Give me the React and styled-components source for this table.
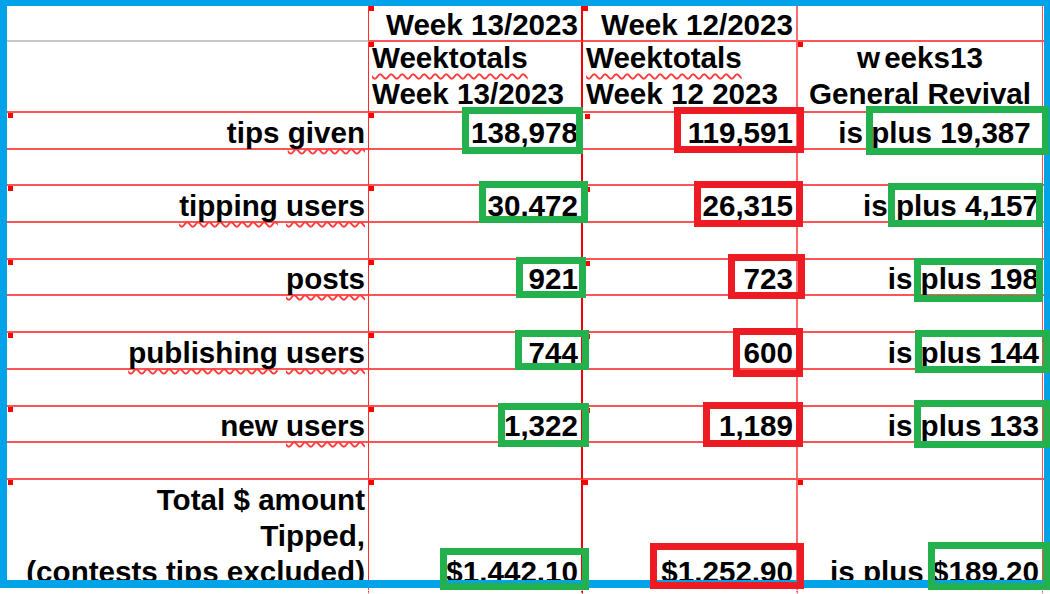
import React from "react";
import styled, { createGlobalStyle } from "styled-components";

const GlobalStyle = createGlobalStyle`
  html, body {
    margin: 0;
    padding: 0;
    background: #fff;
  }
  body {
    font-family: "Liberation Sans", Arial, sans-serif;
  }
`;

// right-hand grid rule of each column (A..E)
const rules = [
  "1px solid #ff2b2b",
  "2px solid #f20000",
  "2px solid #ff6b6b",
  "1px solid #ff4a4a",
  "none",
];

const Sheet = styled.div`
  position: relative;
  width: 1050px;
  height: 594px;
  overflow: hidden;
  display: grid;
  grid-template-columns: 369px 214px 215px 245px 1fr;
  grid-template-rows: 42px 71px repeat(10, 36.7px) 111px 1fr;
  font: bold 29.6px "Liberation Sans", Arial, sans-serif;
  color: #000;
  background: #fff;
`;

const Cell = styled.div`
  position: relative;
  box-sizing: border-box;
  display: flex;
  flex-direction: column;
  justify-content: flex-end;
  padding: 0 3px;
  line-height: 31px;
  white-space: pre;
  text-align: ${(p) => p.$align || "right"};
  border-right: ${(p) => rules[p.$col]};
  border-bottom: 2px solid
    ${(p) => (p.$open ? "transparent" : p.$gray ? "#c6c6c6" : "#ff5454")};

  &::before {
    content: "";
    display: ${(p) => (p.$mark ? "block" : "none")};
    position: absolute;
    left: ${(p) => (p.$mark ? p.$mark[0] : 0)}px;
    top: ${(p) => (p.$mark ? p.$mark[1] : 0)}px;
    width: 5px;
    height: 5px;
    background: #ff0000;
  }
`;

const Lines = styled.span`
  display: block;
  line-height: 36px;
  margin-bottom: -1px;
`;

const Gap = styled.span`
  margin-right: 4px;
`;

// red spell-check squiggle
const Typo = styled.span`
  text-decoration: underline wavy #ff3b3b;
  text-decoration-thickness: 1.5px;
  text-underline-offset: 5px;
  text-decoration-skip-ink: none;
`;

// hand-drawn highlight rectangle laid over a cell
const Mark = styled.span`
  position: absolute;
  box-sizing: border-box;
  left: ${(p) => p.$box[0]}px;
  top: ${(p) => p.$box[1]}px;
  width: ${(p) => p.$box[2]}px;
  height: ${(p) => p.$box[3]}px;
  border: 7px solid ${(p) => (p.$tone === "red" ? "#ed1c24" : "#22b14c")};
  z-index: 3;
  pointer-events: none;
`;

const Frame = styled.div`
  position: absolute;
  left: 0;
  top: 0;
  width: 1050px;
  height: 588px;
  box-sizing: border-box;
  border-style: solid;
  border-color: #00a2e8;
  border-width: 6px 6px 8px 7px;
  z-index: 2;
  pointer-events: none;
`;

const rows = [
  {
    label: <>tips <Typo>given</Typo></>,
    b: "138,978",
    c: "119,591",
    d: "plus 19,387\u00a0",
    boxes: [[92.7, -6.3, 121.6, 47.3], [91, -5.7, 130, 46], [68, -7, 183, 49]],
  },
  {
    label: <><Typo>tipping</Typo> <Typo>users</Typo></>,
    b: "30.472",
    c: "26,315",
    d: "plus 4,157",
    boxes: [[110, -5.4, 108.7, 42.3], [111, -5.4, 109.3, 45.7], [90.3, -3.1, 155, 43.4]],
  },
  {
    label: <Typo>posts</Typo>,
    b: "921",
    c: "723",
    d: "plus 198",
    boxes: [[147, -2.5, 70, 41], [145.3, -5.5, 76.7, 44.7], [116.3, -2.1, 129, 44]],
  },
  {
    label: <><Typo>publishing</Typo> <Typo>users</Typo></>,
    b: "744",
    c: "600",
    d: "plus 144",
    boxes: [[146.3, -3.2, 73.4, 40], [150.3, -4.9, 70, 49], [117, -3.2, 135, 43.3]],
  },
  {
    label: <>new <Typo>users</Typo></>,
    b: "1,322",
    c: "1,189",
    d: "plus 133",
    boxes: [[128.7, -3.9, 91, 44.6], [120.3, -4.6, 100, 45.3], [116.3, -6.6, 135.7, 48.3]],
  },
];

const Blank = ({ open }) => (
  <>
    <Cell $col={0} $open={open} />
    <Cell $col={1} $open={open} />
    <Cell $col={2} $open={open} />
    <Cell $col={3} $open={open} />
    <Cell $col={4} $open={open} />
  </>
);

const DataRow = ({ row }) => (
  <>
    <Cell $col={0} $mark={[8, 0]}>
      <span>{row.label}</span>
    </Cell>
    <Cell $col={1} $mark={[0, 0]}>
      {row.b}
      <Mark $tone="green" $box={row.boxes[0]} />
    </Cell>
    <Cell $col={2} $mark={[2, 1]}>
      {row.c}
      <Mark $tone="red" $box={row.boxes[1]} />
    </Cell>
    <Cell $col={3}>
      <span>is {row.d}</span>
      <Mark $tone="green" $box={row.boxes[2]} />
    </Cell>
    <Cell $col={4} />
  </>
);

export default function App() {
  return (
    <>
      <GlobalStyle />
      <Sheet>
        {/* header */}
        <Cell $col={0} $gray />
        <Cell $col={1} $mark={[0, 6]}>Week 13/2023</Cell>
        <Cell $col={2} $mark={[0, 6]}>Week 12/2023</Cell>
        <Cell $col={3} />
        <Cell $col={4} />

        <Cell $col={0} />
        <Cell $col={1} $align="left" $mark={[0, 0]}>
          <Lines>
            <Typo>Weektotals</Typo>
            {"\n"}Week 13/2023
          </Lines>
        </Cell>
        <Cell $col={2} $align="left">
          <Lines>
            <Typo>Weektotals</Typo>
            {"\n"}Week 12 2023
          </Lines>
        </Cell>
        <Cell $col={3} $align="center" $mark={[0, 0]}>
          <Lines>
            <Gap>w</Gap>
            {"eeks13\n"}General Revival
          </Lines>
        </Cell>
        <Cell $col={4} />

        {rows.map((row, i) => (
          <React.Fragment key={i}>
            <DataRow row={row} />
            <Blank />
          </React.Fragment>
        ))}

        {/* total row */}
        <Cell $col={0} $mark={[8, 0]} $open>
          <Lines>
            {"Total $ amount\nTipped,\n(contests tips excluded)"}
          </Lines>
        </Cell>
        <Cell $col={1} $mark={[0, 0]} $open>
          <Lines>$1.442.10</Lines>
          <Mark $tone="green" $box={[71, 68.3, 148.7, 41.7]} />
        </Cell>
        <Cell $col={2} $mark={[0, 0]} $open>
          <Lines>$1.252.90</Lines>
          <Mark $tone="red" $box={[67, 62.7, 154, 46.6]} />
        </Cell>
        <Cell $col={3} $mark={[0, 0]} $open>
          <Lines>is plus $189.20</Lines>
          <Mark $tone="green" $box={[129.7, 61.7, 122.3, 48.3]} />
        </Cell>
        <Cell $col={4} $open />

        <Blank open />

        <Frame />
      </Sheet>
    </>
  );
}
